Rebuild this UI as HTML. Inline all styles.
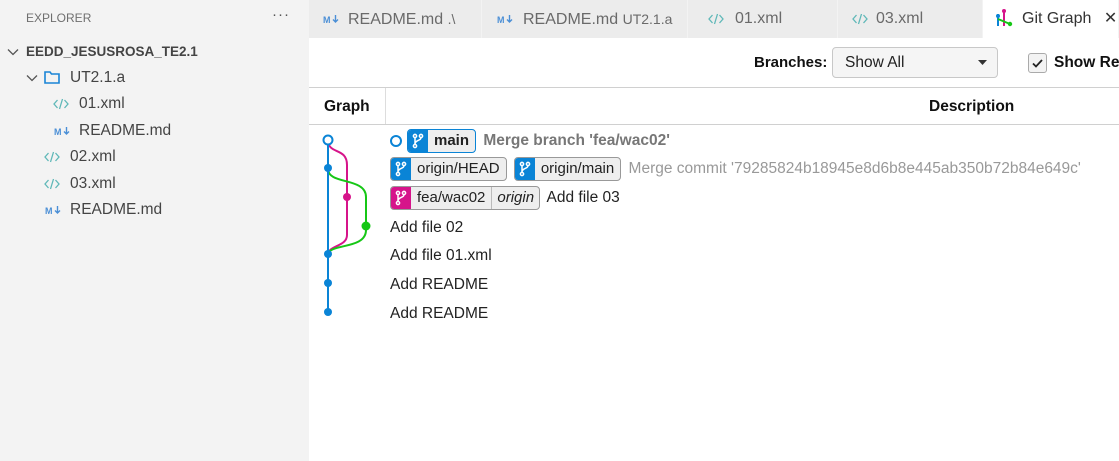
<!DOCTYPE html>
<html><head><style>
*{margin:0;padding:0;box-sizing:border-box}
body{width:1119px;height:461px;overflow:hidden;background:#fff;font-family:"Liberation Sans",sans-serif;position:relative;color:#222}
.abs{position:absolute;white-space:nowrap}
#side{position:absolute;left:0;top:0;width:309px;height:461px;background:#f3f3f3}
.tabs{position:absolute;left:309px;top:0;width:810px;height:38px;background:#ececec}
.tab{position:absolute;top:0;height:38px;border-right:1px solid #f3f3f3;font-size:16px;color:#6a6a6a;line-height:38px}
.f{font-size:15.5px;color:#444;line-height:20px}
.row{position:absolute;left:390px;font-size:15.5px;color:#222;height:24px;line-height:24px}
.ref{display:inline-flex;height:24px;border:1px solid #999;border-radius:4px;overflow:hidden;vertical-align:middle;background:#eee;font-size:15px;line-height:22px;margin-right:3px}
.ref .ic{width:20px;background:#0a84d6;display:flex;align-items:center;justify-content:center}
.ref span{padding:0 6px}
</style></head><body>
<svg width="0" height="0" style="position:absolute">
 <symbol id="br" viewBox="0 0 12 16"><g fill="none" stroke="#fff" stroke-width="1.5"><circle cx="3" cy="3" r="1.6"/><circle cx="9" cy="3" r="1.6"/><circle cx="3" cy="13" r="1.6"/><path d="M3 4.6V11.4M9 4.6C9 8 3 7 3 11"/></g></symbol>
 <symbol id="md" viewBox="0 0 16 10"><text x="0" y="9" font-size="9" font-weight="bold" fill="#4b8fd6" font-family="Liberation Sans">M</text><path d="M12.5 1v7M10 5.5l2.5 2.5 2.5-2.5" stroke="#4b8fd6" stroke-width="1.4" fill="none"/></symbol>
 <symbol id="xml" viewBox="0 0 16 12"><path d="M4.5 2L1 6l3.5 4M11.5 2L15 6l-3.5 4M9.5 1L6.5 11" stroke="#5fb8b8" stroke-width="1.3" fill="none"/></symbol>
</svg>
<div id="side">
 <div class="abs" style="left:26px;top:11px;font-size:12px;color:#6f6f6f">EXPLORER</div>
 <div class="abs" style="left:272px;top:6px;font-size:15px;color:#555;letter-spacing:1px">···</div>
 <svg class="abs" style="left:7px;top:48px" width="12" height="8"><path d="M1 1.5l5 5 5-5" fill="none" stroke="#555" stroke-width="1.3"/></svg>
 <div class="abs" style="left:26px;top:44px;font-size:13.5px;font-weight:bold;color:#444">EEDD_JESUSROSA_TE2.1</div>
 <svg class="abs" style="left:26px;top:74px" width="12" height="8"><path d="M1 1.5l5 5 5-5" fill="none" stroke="#555" stroke-width="1.3"/></svg>
 <svg class="abs" style="left:44px;top:71px" width="16" height="13"><path d="M1 1h5l1.5 2H15v9H1z" fill="none" stroke="#1a85d6" stroke-width="1.6"/></svg>
 <div class="abs f" style="left:70px;top:68px">UT2.1.a</div>
 <svg class="abs" style="left:53px;top:98px" width="16" height="12"><use href="#xml"/></svg>
 <div class="abs f" style="left:79px;top:94px">01.xml</div>
 <svg class="abs" style="left:54px;top:126px" width="16" height="10"><use href="#md"/></svg>
 <div class="abs f" style="left:79px;top:121px">README.md</div>
 <svg class="abs" style="left:44px;top:151px" width="16" height="12"><use href="#xml"/></svg>
 <div class="abs f" style="left:70px;top:147px">02.xml</div>
 <svg class="abs" style="left:44px;top:178px" width="16" height="12"><use href="#xml"/></svg>
 <div class="abs f" style="left:70px;top:174px">03.xml</div>
 <svg class="abs" style="left:45px;top:205px" width="16" height="10"><use href="#md"/></svg>
 <div class="abs f" style="left:70px;top:200px">README.md</div>
</div>
<div class="tabs">
 <div class="tab" style="left:0;width:173px;padding-left:39px">README.md <span style="font-size:14px">.\</span></div>
 <svg class="abs" style="left:14px;top:14px" width="16" height="10"><use href="#md"/></svg>
 <div class="tab" style="left:173px;width:206px;padding-left:41px">README.md <span style="font-size:14px">UT2.1.a</span></div>
 <svg class="abs" style="left:188px;top:14px" width="16" height="10"><use href="#md"/></svg>
 <div class="tab" style="left:379px;width:150px;padding-left:47px">01.xml</div>
 <svg class="abs" style="left:399px;top:13px" width="16" height="12"><use href="#xml"/></svg>
 <div class="tab" style="left:529px;width:145px;padding-left:38px">03.xml</div>
 <svg class="abs" style="left:543px;top:13px" width="16" height="12"><use href="#xml"/></svg>
 <div class="tab" style="left:674px;width:136px;background:#fff;color:#333;padding-left:39px">Git Graph <span style="margin-left:8px;font-size:16px">✕</span></div>
 <svg class="abs" style="left:686px;top:8px" width="18" height="20"><line x1="3" y1="6" x2="3" y2="18" stroke="#0a84d6" stroke-width="2"/><line x1="9" y1="3" x2="9" y2="18" stroke="#d6148a" stroke-width="2"/><path d="M3 11L15 16" stroke="#16c716" stroke-width="2"/><circle cx="9" cy="3" r="2" fill="#d6148a"/><circle cx="3" cy="8" r="2" fill="#0a84d6"/><circle cx="15" cy="16" r="2.2" fill="#16c716"/></svg>
</div>
<div class="abs" style="left:754px;top:54px;font-size:15px;font-weight:bold;color:#111">Branches:</div>
<div class="abs" style="left:832px;top:47px;width:166px;height:31px;border:1px solid #c8c8c8;border-radius:4px;background:#f5f5f5;font-size:15.5px;padding:6px 12px;color:#222">Show All<svg style="position:absolute;right:10px;top:12px" width="9" height="5"><path d="M0 0h9L4.5 5z" fill="#333"/></svg></div>
<div class="abs" style="left:1028px;top:53px;width:19px;height:20px;border:1px solid #aaa;border-radius:3px;background:#f3f3f3"><svg width="17" height="18"><path d="M4 9.5l3 3 6-6.5" fill="none" stroke="#222" stroke-width="1.8"/></svg></div>
<div class="abs" style="left:1054px;top:54px;font-size:15.5px;font-weight:bold;color:#111">Show Rem</div>
<div class="abs" style="left:309px;top:87px;width:810px;height:1px;background:#d0d0d0"></div>
<div class="abs" style="left:309px;top:124px;width:810px;height:1px;background:#d0d0d0"></div>
<div class="abs" style="left:385px;top:88px;width:1px;height:36px;background:#ddd"></div>
<div class="abs" style="left:324px;top:98px;font-size:15.5px;font-weight:bold;color:#111">Graph</div>
<div class="abs" style="left:929px;top:98px;font-size:15.5px;font-weight:bold;color:#111">Description</div>
<svg class="abs" style="left:309px;top:125px" width="80" height="200">
 <g fill="none" stroke-width="2">
 <path d="M19 15 C19 30 38 22 38 40 V110 C38 122 19 120 19 130" stroke="#d6148a"/>
 <path d="M19 44 C19 60 57 52 57 72 V105 C57 125 19 118 19 130" stroke="#16c716"/>
 <path d="M19 20 V187" stroke="#0a84d6"/>
 </g>
 <circle cx="19" cy="15" r="4.5" fill="#fff" stroke="#0a84d6" stroke-width="2"/>
 <circle cx="19" cy="43" r="4" fill="#0a84d6"/>
 <circle cx="38" cy="72" r="4" fill="#d6148a"/>
 <circle cx="57" cy="101" r="4.5" fill="#16c716"/>
 <circle cx="19" cy="129" r="4" fill="#0a84d6"/>
 <circle cx="19" cy="158" r="4" fill="#0a84d6"/>
 <circle cx="19" cy="187" r="4" fill="#0a84d6"/>
</svg>
<div class="row" style="top:129px"><span style="display:inline-block;width:12px;height:12px;border:2px solid #0a84d6;border-radius:50%;vertical-align:middle;margin-right:5px"></span><span class="ref" style="border-color:#0a84d6"><b class="ic"><svg width="12" height="16"><use href="#br"/></svg></b><span style="font-weight:bold">main</span></span> <b style="color:#777">Merge branch 'fea/wac02'</b></div>
<div class="row" style="top:157px"><span class="ref"><b class="ic"><svg width="12" height="16"><use href="#br"/></svg></b><span>origin/HEAD</span></span> <span class="ref"><b class="ic"><svg width="12" height="16"><use href="#br"/></svg></b><span>origin/main</span></span> <span style="color:#999">Merge commit '79285824b18945e8d6b8e445ab350b72b84e649c'</span></div>
<div class="row" style="top:186px"><span class="ref"><b class="ic" style="background:#d6148a"><svg width="12" height="16"><use href="#br"/></svg></b><span>fea/wac02</span><span style="border-left:1px solid #bbb;font-style:italic;padding:0 5px">origin</span></span> Add file 03</div>
<div class="row" style="top:216px">Add file 02</div>
<div class="row" style="top:244px">Add file 01.xml</div>
<div class="row" style="top:273px">Add README</div>
<div class="row" style="top:302px">Add README</div>
</body></html>
